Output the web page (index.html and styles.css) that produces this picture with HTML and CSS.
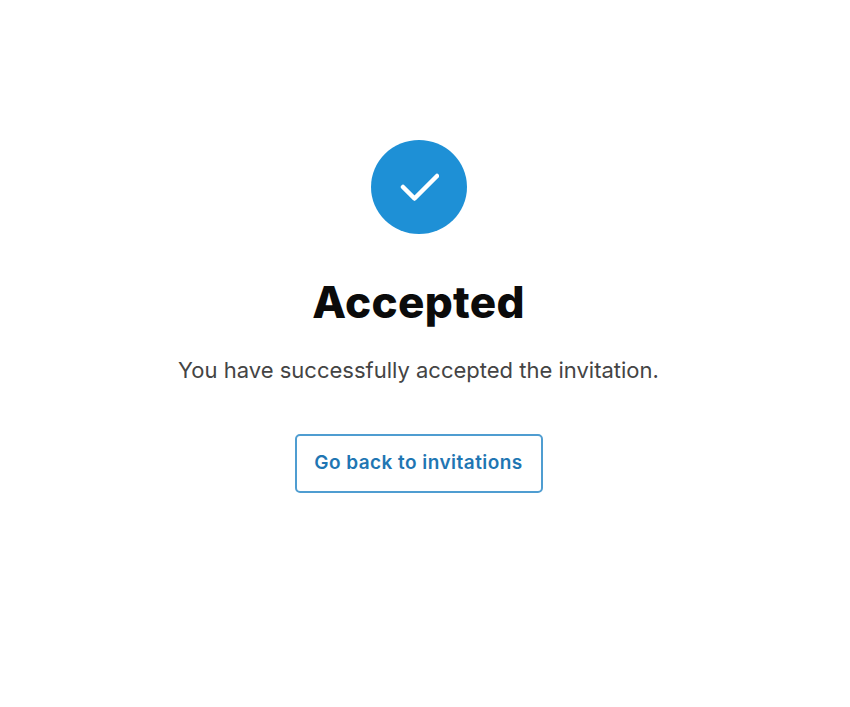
FILE: index.html
```html
<!DOCTYPE html>
<html lang="en">
<head>
<meta charset="utf-8">
<title>Accepted</title>
<link rel="stylesheet" href="styles.css">
</head>
<body>
<main class="page">
  <div class="badge">
    <svg class="check" width="40" height="30" viewBox="0 0 40 30" fill="none"><path d="M4 15 L15.5 26.5 L38 4" stroke="#fff" stroke-width="4.5" stroke-linecap="round" stroke-linejoin="round"/></svg>
  </div>
  <h1 class="title">Accepted</h1>
  <p class="message">You have successfully accepted the invitation.</p>
  <a class="button" href="#">Go back to invitations</a>
</main>
</body>
</html>
```
FILE: styles.css
```css
html, body { margin: 0; padding: 0; background: #fff; }
.page {
  display: flex; flex-direction: column; align-items: center;
  padding-top: 140px; width: 837px; height: 567px;
  font-family: "Inter", "Noto Sans", sans-serif;
}
.badge {
  width: 96px; height: 94px; border-radius: 50%; background: #1e90d6;
  display: flex; align-items: center; justify-content: center;
}
.title { margin: 42px 0 0; font-size: 44px; line-height: 52px; font-weight: 800; letter-spacing: 0.3px; color: #0b0b0b; }
.message { margin: 27px 0 0; font-size: 22px; line-height: 30px; color: #444; font-weight: 400; }
.button {
  margin-top: 49px; box-sizing: border-box; width: 248px; height: 59px; padding-bottom: 2px;
  display: flex; align-items: center; justify-content: center;
  border: 2px solid #4f9dd1; border-radius: 5px;
  color: #1f76b3; font-size: 19px; letter-spacing: 0.45px; font-weight: 600; text-decoration: none;
}
```
